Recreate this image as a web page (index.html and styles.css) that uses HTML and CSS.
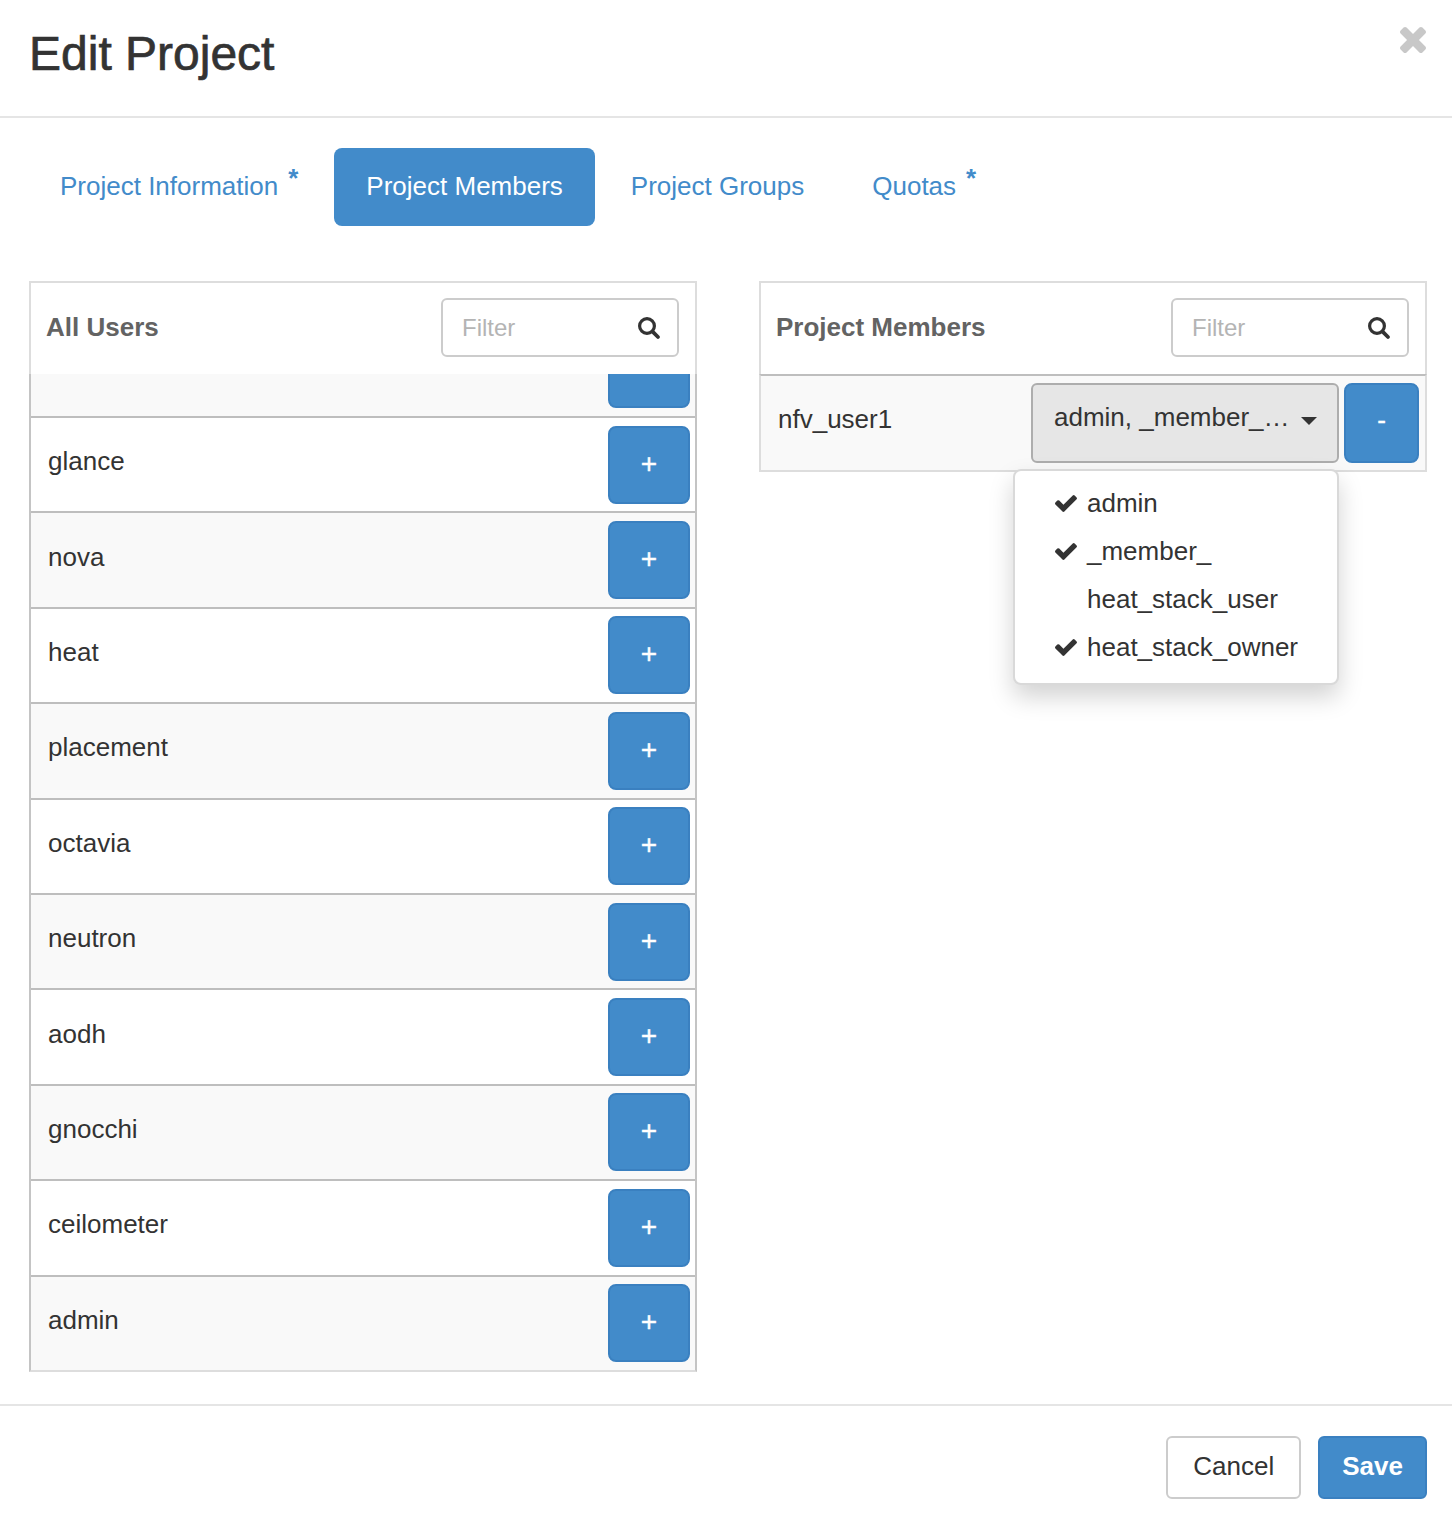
FILE: index.html
```html
<!DOCTYPE html>
<html lang="en">
<head>
<meta charset="utf-8">
<title>Edit Project</title>
<link rel="stylesheet" href="styles.css">
</head>
<body>
<div class="modal">
  <div class="modal-header">
    <h4 class="modal-title">Edit Project</h4>
    <button class="close" type="button" aria-label="Close">
      <svg viewBox="302 366 1188 1188" width="26" height="26"><path fill="currentColor" d="M1490 1322q0 40-28 68l-136 136q-28 28-68 28t-68-28l-294-294-294 294q-28 28-68 28t-68-28l-136-136q-28-28-28-68t28-68l294-294-294-294q-28-28-28-68t28-68l136-136q28-28 68-28t68 28l294 294 294-294q28-28 68-28t68 28l136 136q28 28 28 68t-28 68l-294 294 294 294q28 28 28 68z"/></svg>
    </button>
  </div>

  <div class="modal-body">
    <ul class="nav-pills">
      <li><a>Project Information<span class="req">*</span></a></li>
      <li class="active"><a>Project Members</a></li>
      <li><a>Project Groups</a></li>
      <li><a>Quotas<span class="req">*</span></a></li>
    </ul>

    <div class="members">
      <section class="panel">
        <div class="panel-head">
          <h5 class="panel-title">All Users</h5>
          <label class="filter">
            <input type="text" placeholder="Filter">
            <svg viewBox="0 0 24 24" width="24" height="24"><circle cx="10" cy="10" r="7.4" fill="none" stroke="currentColor" stroke-width="3.2"/><line x1="15.6" y1="15.6" x2="21" y2="21" stroke="currentColor" stroke-width="3.8" stroke-linecap="round"/></svg>
          </label>
        </div>
        <div class="list">
          <div class="row first odd"><span class="name"></span><button class="btn-add" type="button" aria-label="Add"></button></div>
          <div class="row"><span class="name">glance</span><button class="btn-add" type="button">+</button></div>
          <div class="row odd"><span class="name">nova</span><button class="btn-add" type="button">+</button></div>
          <div class="row"><span class="name">heat</span><button class="btn-add" type="button">+</button></div>
          <div class="row odd"><span class="name">placement</span><button class="btn-add" type="button">+</button></div>
          <div class="row"><span class="name">octavia</span><button class="btn-add" type="button">+</button></div>
          <div class="row odd"><span class="name">neutron</span><button class="btn-add" type="button">+</button></div>
          <div class="row"><span class="name">aodh</span><button class="btn-add" type="button">+</button></div>
          <div class="row odd"><span class="name">gnocchi</span><button class="btn-add" type="button">+</button></div>
          <div class="row"><span class="name">ceilometer</span><button class="btn-add" type="button">+</button></div>
          <div class="row odd"><span class="name">admin</span><button class="btn-add" type="button">+</button></div>
        </div>
      </section>

      <section class="panel right">
        <div class="panel-head">
          <h5 class="panel-title">Project Members</h5>
          <label class="filter">
            <input type="text" placeholder="Filter">
            <svg viewBox="0 0 24 24" width="24" height="24"><circle cx="10" cy="10" r="7.4" fill="none" stroke="currentColor" stroke-width="3.2"/><line x1="15.6" y1="15.6" x2="21" y2="21" stroke="currentColor" stroke-width="3.8" stroke-linecap="round"/></svg>
          </label>
        </div>
        <div class="member-row">
          <span class="name">nfv_user1</span>
          <div class="roles">
            <button class="btn-roles" type="button"><span>admin, _member_…</span><span class="caret"></span></button>
            <ul class="dropdown-menu">
              <li><svg class="check" viewBox="121 334 1550 1188" width="22" height="17"><path fill="currentColor" d="M1671 566q0 40-28 68l-724 724-136 136q-28 28-68 28t-68-28l-136-136-362-362q-28-28-28-68t28-68l136-136q28-28 68-28t68 28l294 295 656-657q28-28 68-28t68 28l136 136q28 28 28 68z"/></svg>admin</li>
              <li><svg class="check" viewBox="121 334 1550 1188" width="22" height="17"><path fill="currentColor" d="M1671 566q0 40-28 68l-724 724-136 136q-28 28-68 28t-68-28l-136-136-362-362q-28-28-28-68t28-68l136-136q28-28 68-28t68 28l294 295 656-657q28-28 68-28t68 28l136 136q28 28 28 68z"/></svg>_member_</li>
              <li><span class="check blank"></span>heat_stack_user</li>
              <li><svg class="check" viewBox="121 334 1550 1188" width="22" height="17"><path fill="currentColor" d="M1671 566q0 40-28 68l-724 724-136 136q-28 28-68 28t-68-28l-136-136-362-362q-28-28-28-68t28-68l136-136q28-28 68-28t68 28l294 295 656-657q28-28 68-28t68 28l136 136q28 28 28 68z"/></svg>heat_stack_owner</li>
            </ul>
          </div>
          <button class="btn-remove" type="button">-</button>
        </div>
      </section>
    </div>
  </div>

  <div class="modal-footer">
    <button class="btn btn-default" type="button">Cancel</button>
    <button class="btn btn-primary" type="button">Save</button>
  </div>
</div>
</body>
</html>
```

FILE: styles.css
```css
* { box-sizing: border-box; }

html, body {
  margin: 0;
  padding: 0;
  background: #fff;
}

body {
  font-family: "Liberation Sans", Arial, Helvetica, sans-serif;
  font-size: 26px;
  line-height: 37px;
  color: #333;
  width: 1452px;
}

button {
  font-family: inherit;
  cursor: pointer;
}

/* ---------- header ---------- */
.modal-header {
  display: flex;
  justify-content: space-between;
  align-items: flex-start;
  padding: 28px 26px 36px 29px;
  border-bottom: 2px solid #e5e5e5;
}

.modal-title {
  margin: 0;
  font-size: 48px;
  line-height: 52px;
  font-weight: normal;
  color: #333;
  -webkit-text-stroke: 0.7px #333;
}

.close {
  margin: -1px 0 0 0;
  padding: 0;
  border: 0;
  background: none;
  color: #c8c8c8;
  line-height: 0;
}

/* ---------- body ---------- */
.modal-body {
  padding: 30px 25px 32px 29px;
}

.nav-pills {
  list-style: none;
  margin: 0 0 0 -1px;
  padding: 0;
  display: flex;
  gap: 4px;
}

.nav-pills a {
  display: block;
  padding: 20px 32px 21px;
  line-height: 37px;
  color: #428bca;
  border-radius: 8px;
  white-space: nowrap;
}

.nav-pills .active a {
  background: #428bca;
  color: #fff;
}

.req {
  margin-left: 10px;
  font-weight: bold;
  line-height: 0;
  vertical-align: 8px;
  color: #428bca;
}

.members {
  margin-top: 55px;
  display: grid;
  grid-template-columns: 668px 668px;
  column-gap: 62px;
  align-items: start;
}

.panel {
  border-top: 2px solid #dddddd;
}

.panel-head {
  display: flex;
  justify-content: space-between;
  align-items: center;
  height: 91px;
  padding: 0 16px 2px 15px;
  border-left: 2px solid #dddddd;
  border-right: 2px solid #dddddd;
  background: #fff;
}

.panel-title {
  margin: 0;
  font-size: 26px;
  font-weight: bold;
  color: #636363;
}

.filter {
  display: flex;
  align-items: center;
  width: 238px;
  height: 59px;
  border: 2px solid #cccccc;
  border-radius: 6px;
  padding: 0 16px 0 19px;
  color: #333;
}

.filter input {
  flex: 1;
  min-width: 0;
  border: 0;
  outline: 0;
  padding: 0;
  background: transparent;
  font-family: inherit;
  font-size: 24px;
  color: #555;
}

.filter input::placeholder {
  color: #b4b4b4;
}

.filter svg {
  flex: none;
  display: block;
}

/* ---------- all users list ---------- */
.list {
  height: 998px;
  overflow: hidden;
  border-left: 2px solid #c4c4c4;
  border-right: 2px solid #c4c4c4;
  border-bottom: 2px solid #dddddd;
}

.row {
  display: flex;
  justify-content: space-between;
  align-items: center;
  height: 95.4px;
  padding: 0 5px 0 17px;
  border-top: 2px solid #bebebe;
  background: #fff;
}

.row .name {
  padding-bottom: 6px;
}

.row.odd {
  background: #f9f9f9;
}

.row.first {
  margin-top: -53.4px;
}

.btn-add,
.btn-remove {
  width: 82px;
  height: 78px;
  border: 2px solid #3a80c0;
  border-radius: 8px;
  background: #428bca;
  color: #fff;
  font-size: 28px;
  line-height: 1;
  padding: 0 0 2px;
  -webkit-text-stroke: 0.4px #fff;
}

/* ---------- project members ---------- */
.member-row {
  display: flex;
  align-items: center;
  height: 98px;
  padding: 0 6px 0 17px;
  border-top: 2px solid #bebebe;
  border-bottom: 2px solid #dddddd;
  border-left: 2px solid #dddddd;
  border-right: 2px solid #dddddd;
  background: #f9f9f9;
}

.member-row .name {
  flex: 1;
  padding-bottom: 8px;
}

.roles {
  position: relative;
}

.btn-roles {
  display: flex;
  align-items: center;
  justify-content: space-between;
  width: 308px;
  height: 80px;
  padding: 0 20px 12px 21px;
  border: 2px solid #adadad;
  border-radius: 6px;
  background: #e6e6e6;
  color: #333;
  font-size: 26px;
}

.caret {
  width: 0;
  height: 0;
  border-left: 8px solid transparent;
  border-right: 8px solid transparent;
  border-top: 8px solid #333;
  margin-top: 7px;
}

.btn-remove {
  width: 75px;
  height: 80px;
  margin-left: 5px;
  padding-bottom: 6px;
  font-size: 26px;
}

.dropdown-menu {
  position: absolute;
  top: calc(100% + 6px);
  right: 0;
  width: 326px;
  margin: 0;
  padding: 8px 0 12px;
  list-style: none;
  background: #fff;
  border: 2px solid rgba(0, 0, 0, 0.15);
  border-radius: 8px;
  box-shadow: 0 12px 24px rgba(0, 0, 0, 0.175);
  z-index: 10;
}

.dropdown-menu li {
  display: flex;
  align-items: center;
  height: 48px;
  padding-left: 40px;
  color: #333;
  white-space: nowrap;
}

.check {
  flex: none;
  width: 22px;
  height: 17px;
  margin-right: 10px;
  color: #333;
}

/* ---------- footer ---------- */
.modal-footer {
  display: flex;
  justify-content: flex-end;
  gap: 17px;
  padding: 30px 25px 29px;
  border-top: 2px solid #e5e5e5;
}

.btn {
  height: 63px;
  padding: 0 24px 2px;
  border-radius: 6px;
  font-size: 26px;
  line-height: 37px;
}

.btn-default {
  border: 2px solid #cccccc;
  background: #fff;
  color: #333;
  padding: 0 25px 2px;
}

.btn-primary {
  border: 2px solid #3a80c0;
  background: #428bca;
  color: #fff;
  font-weight: bold;
  padding: 0 22px 2px;
}
```
